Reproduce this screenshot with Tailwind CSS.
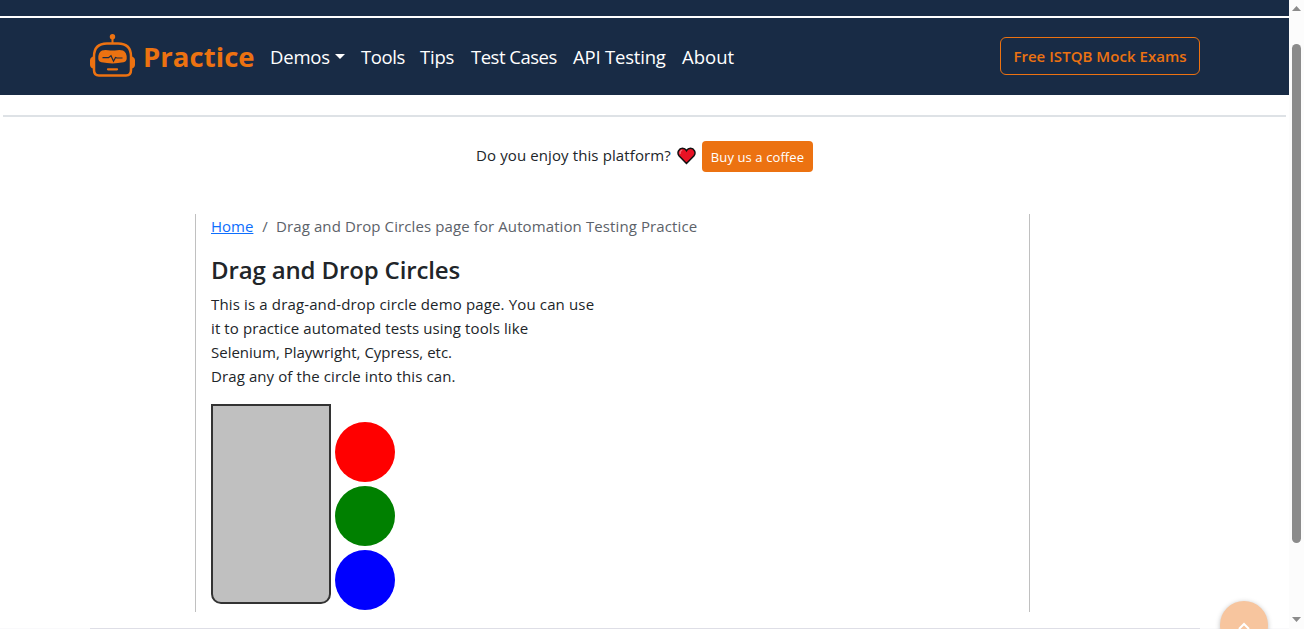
<!DOCTYPE html>
<html lang="en">
<head>
<meta charset="utf-8">
<title>Drag and Drop Circles</title>
<script src="https://cdn.jsdelivr.net/npm/@tailwindcss/browser@4"></script>
</head>
<body class="flex h-[629px] w-[1304px] overflow-hidden bg-white font-['Open_Sans','Noto_Sans',sans-serif] text-[15px] leading-6 text-[#212529]">
<div class="relative flex h-full w-[1289px] flex-col overflow-hidden">
  <div class="h-4 shrink-0 bg-[#182b45]"></div>
  <header class="mt-0.5 flex h-[77px] shrink-0 items-center bg-[#182b45] pl-[90px] pr-[89px]">
    <svg class="mb-[1px] h-[44px] w-[45px] shrink-0" viewBox="0 0 45 44" fill="none" stroke="#ec7211">
      <circle cx="22.500" cy="2.700" r="2.700" fill="#ec7211" stroke="none"/>
      <path d="M22.500 4v6" stroke-width="2"/>
      <path d="M17 9.500h11q13 0 13 13V36q0 5.500-5 5.500H9q-5 0-5-5.500V22.500q0-13 13-13z" stroke-width="2.500"/>
      <path d="M3 22.500v12q-3-1-3-4v-4q0-3 3-4zM42 22.500v12q3-1 3-4v-4q0-3-3-4z" fill="#ec7211" stroke="none"/>
      <path d="M12 16.500q3-1 6-.3 4.500.4 9 0 3-.7 6 .3 4 2 3.700 8 0 3-3.200 3.800-11 2.200-22 0-3.200-.8-3.200-3.800-.3-6 3.700-8z" fill="#ec7211" stroke="none"/>
      <path d="M12.500 23.700h6l2.500-2 2.500 5.500 2-3.800 1.500 .6h5.500" stroke="#182b45" stroke-width="1.200"/>
      <path d="M18 35.300h9" stroke-width="2.300" stroke-linecap="round"/>
    </svg>
    <span class="ml-2 w-28 whitespace-nowrap text-[27.500px] font-bold tracking-[0.05px] text-[#ec7211]">Practice</span>
    <nav class="ml-4 flex items-center whitespace-nowrap text-[18.500px] tracking-[-0.2px] text-white">
      <span class="-ml-px w-[60px]">Demos</span>
      <span class="ml-[5px] w-[10px] border-x-[5px] border-t-[5px] border-x-transparent border-t-white"></span>
      <span class="ml-4 w-11 tracking-[-0.4px]">Tools</span>
      <span class="ml-[15px] w-[35px]">Tips</span>
      <span class="ml-4 w-[86px] tracking-[-0.500px]">Test Cases</span>
      <span class="ml-4 w-[93px]">API Testing</span>
      <span class="ml-4 tracking-[0px]">About</span>
    </nav>
    <span class="mb-px ml-auto flex h-[38px] w-[200px] items-center justify-center whitespace-nowrap rounded-md border border-[#ec7211] text-[15px] font-semibold tracking-[0.04px] text-[#ec7211]">Free ISTQB Mock Exams</span>
  </header>
  <div class="mx-[3px] mt-5 h-0.5 shrink-0 bg-[#dee2e6]"></div>
  <div class="mt-6 flex h-[31px] shrink-0 items-center pl-[476px]">
    <span class="w-[196px] whitespace-nowrap pb-[3px] tracking-[0.11px]">Do you enjoy this platform?</span>
    <svg class="mb-[2px] ml-[5px] h-[18px] w-[19px]" viewBox="0 0 19 18">
      <path d="M9.500 16.500L2.200 9Q.2 6.500 1.500 3.800 2.800 1.300 5.500 1.300q2.600 0 4 2.400 1.400-2.400 4-2.400 2.700 0 4 2.500 1.300 2.700-.7 5.200z" fill="#e81224" stroke="#111" stroke-width="1.500"/>
      <path d="M3.200 7q-.7-3 2-4" stroke="#f46b77" stroke-width="1.200" fill="none"/>
    </svg>
    <span class="ml-1.5 flex h-[31px] w-[111px] items-center justify-center whitespace-nowrap rounded bg-[#ec7211] text-[13px] tracking-[0.1px] text-white">Buy us a coffee</span>
  </div>
  <main class="ml-[195px] mt-[42px] h-[398px] w-[835px] shrink-0 border-x border-[#c0c0c0] pl-[15px]">
    <div class="flex whitespace-nowrap text-[#5c6269]"><span class="w-[43px] text-[#0d6efd] underline">Home</span><span class="w-[22px] text-center">/</span><span class="tracking-[0.105px]">Drag and Drop Circles page for Automation Testing Practice</span></div>
    <h1 class="mt-[17px] h-[29px] text-2xl font-semibold leading-[30px] tracking-[-0.14px]">Drag and Drop Circles</h1>
    <p class="mt-2 whitespace-nowrap"><span class="tracking-[0.145px]">This is a drag-and-drop circle demo page. You can use</span><br><span class="tracking-[0.1px]">it to practice automated tests using tools like</span><br>Selenium, Playwright, Cypress, etc.<br><span class="tracking-[0.1px]">Drag any of the circle into this can.</span></p>
    <div class="mt-4 flex">
      <div class="h-[200px] w-[120px] rounded-b-[10px] border-2 border-[#333] bg-[#c0c0c0]"></div>
      <div class="ml-1 mt-[18px] flex flex-col gap-1">
        <div class="size-[60px] rounded-full bg-[red]"></div>
        <div class="size-[60px] rounded-full bg-[green]"></div>
        <div class="size-[60px] rounded-full bg-[blue]"></div>
      </div>
    </div>
  </main>
  <footer class="mt-4 h-px shrink-0 bg-[#f9f9fb] pl-[90px] pr-[89px]"><div class="h-px bg-[#dedee6]"></div></footer>
  <div class="absolute left-[1220px] top-[601px] flex size-12 justify-center rounded-full bg-[#f7c59e] pt-[21px] shadow-[0_1px_5px_rgba(0,0,0,0.25)]">
    <svg class="size-3" viewBox="0 0 12 12" fill="none" stroke="#fff" stroke-width="2"><path d="M1 7L6 2l5 5"/></svg>
  </div>
</div>
<aside class="flex w-[15px] flex-col items-center bg-[#fcfcfc]">
  <div class="mt-1.5 h-[5px] w-[9px] bg-[#8b8b8b] [clip-path:polygon(50%_0,100%_100%,0_100%)]"></div>
  <div class="mt-[33px] h-[499px] w-[9px] rounded-full bg-[#8b8b8b]"></div>
  <div class="mt-[74px] h-[5px] w-[9px] bg-[#8b8b8b] [clip-path:polygon(0_0,100%_0,50%_100%)]"></div>
</aside>
</body>
</html>
